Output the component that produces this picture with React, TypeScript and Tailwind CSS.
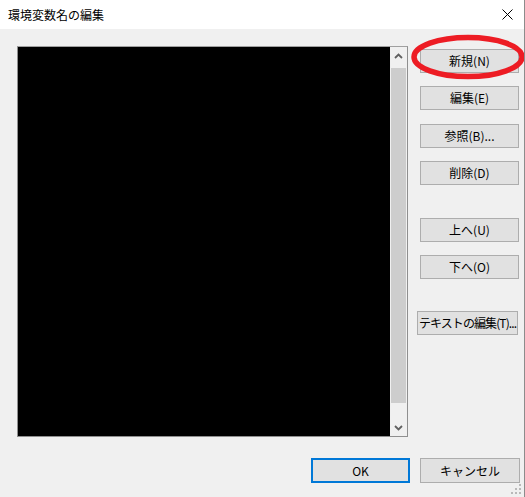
import { ReactNode } from "react"

const font = { fontFamily: '"Noto Sans CJK JP", "Noto Sans", sans-serif' }

function WinButton({ label, className = "" }: { label: string; className?: string }) {
    return (
        <button
            className={`h-[24px] bg-[#e1e1e1] border border-[#adadad] text-[12px] leading-none text-black whitespace-nowrap flex items-center justify-center ${className}`}
        >
            {label}
        </button>
    )
}

function Chevron({ up }: { up?: boolean }) {
    return (
        <svg width="9" height="6" viewBox="0 0 9 6">
            <path
                d={up ? "M1 5 L4.5 1.5 L8 5" : "M1 1 L4.5 4.5 L8 1"}
                fill="none"
                stroke="#606060"
                strokeWidth="1.8"
            />
        </svg>
    )
}

function ListBox({ children }: { children?: ReactNode }) {
    return (
        <div className="w-[391px] h-[391px] border border-[#8f8f8f] border-t-[#a0a0a0] flex bg-black">
            <div className="flex-1 bg-black">{children}</div>
            <div className="w-[17px] bg-[#f0f0f0] flex flex-col">
                <div className="h-[17px] flex items-center justify-center">
                    <Chevron up />
                </div>
                <div className="flex-1 px-[1px] pt-[4px] pb-[16px]">
                    <div className="w-full h-full bg-[#cdcdcd]" />
                </div>
                <div className="h-[17px] flex items-center justify-center">
                    <Chevron />
                </div>
            </div>
        </div>
    )
}

export default function App() {
    return (
        <div
            className="relative w-[525px] h-[497px] bg-[#f0f0f0] border-r border-[#8c8c8c] overflow-hidden flex flex-col"
            style={font}
        >
            <div className="h-[29px] bg-white flex items-center justify-between pl-[8px] pr-[11px] shrink-0">
                <span className="text-[12px] leading-none text-black">環境変数名の編集</span>
                <svg width="11" height="11" viewBox="0 0 11 11">
                    <path d="M0.5 0.5 L10.5 10.5 M10.5 0.5 L0.5 10.5" stroke="#000" strokeWidth="1" />
                </svg>
            </div>

            <div className="flex pl-[17px] pt-[17px]">
                <ListBox />
                <div className="flex flex-col ml-[9px]">
                    <WinButton label="新規(N)" className="w-[99px] ml-[3px] mt-[3px]" />
                    <WinButton label="編集(E)" className="w-[99px] ml-[3px] mt-[13px]" />
                    <WinButton label="参照(B)..." className="w-[99px] ml-[3px] mt-[14px]" />
                    <WinButton label="削除(D)" className="w-[99px] ml-[3px] mt-[13px]" />
                    <WinButton label="上へ(U)" className="w-[99px] ml-[3px] mt-[33px]" />
                    <WinButton label="下へ(O)" className="w-[99px] ml-[3px] mt-[13px]" />
                    <WinButton label="テキストの編集(T)..." className="w-[101px] mt-[32px] tracking-[-0.9px]" />
                </div>
            </div>

            <div className="flex justify-end gap-[10px] pr-[4px] mt-[21px]">
                <button className="w-[99px] h-[25px] bg-[#e1e1e1] border-2 border-[#0078d7] text-[12px] leading-none text-black flex items-center justify-center">
                    OK
                </button>
                <WinButton label="キャンセル" className="w-[100px] h-[25px]" />
            </div>

            <svg className="absolute right-[3px] bottom-[3px]" width="10" height="10" viewBox="0 0 10 10">
                {[
                    [8, 0],
                    [8, 4],
                    [4, 4],
                    [8, 8],
                    [4, 8],
                    [0, 8],
                ].map(([x, y], i) => (
                    <rect key={i} x={x} y={y} width="2" height="2" fill="#b9b9b9" />
                ))}
            </svg>

            <svg className="absolute left-[410px] top-[33px] pointer-events-none" width="116" height="48" viewBox="0 0 116 48">
                <ellipse cx="58" cy="24" rx="54" ry="19.5" fill="none" stroke="#ed1c24" strokeWidth="5.5" />
            </svg>
        </div>
    )
}
